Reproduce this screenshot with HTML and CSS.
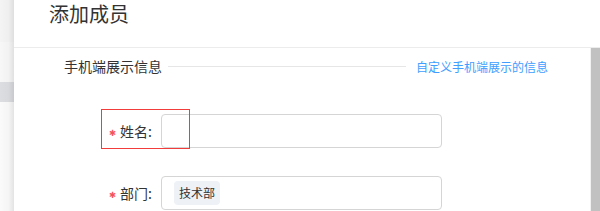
FILE: index.html
```html
<!DOCTYPE html>
<html lang="zh-CN">
<head>
<meta charset="utf-8">
<title>添加成员</title>
<link rel="stylesheet" href="styles.css">
</head>
<body>
<div class="screen">
  <div class="backdrop">
    <div class="bd-a"></div>
    <div class="bd-b"></div>
    <div class="bd-c"></div>
    <div class="bd-d"></div>
  </div>
  <div class="modal">
    <div class="modal-header">添加成员</div>
    <div class="modal-main">
      <div class="modal-body">
        <div class="section-title">
          <span class="section-name">手机端展示信息</span>
          <span class="section-line"></span>
          <a class="section-link">自定义手机端展示的信息</a>
        </div>
        <div class="form">
          <div class="form-row">
            <label class="form-label"><span class="req">✱</span>姓名:</label>
            <div class="input"></div>
          </div>
          <div class="form-row">
            <label class="form-label"><span class="req">✱</span>部门:</label>
            <div class="input"><span class="tag">技术部</span></div>
          </div>
        </div>
        <div class="highlight"></div>
      </div>
      <div class="scrollbar"><div class="thumb"></div></div>
    </div>
  </div>
</div>
</body>
</html>
```
FILE: styles.css
```css
html, body {
  margin: 0;
  padding: 0;
  background: #fff;
  font-family: "Noto Sans CJK SC", "Noto Sans", "Liberation Sans", sans-serif;
  color: #333;
}
.screen {
  display: flex;
  width: 600px;
  height: 211px;
  overflow: hidden;
}
.backdrop {
  width: 14px;
  flex: none;
  display: flex;
  flex-direction: column;
  position: relative;
}
.backdrop::after {
  content: "";
  position: absolute;
  inset: 0;
  background: linear-gradient(to right, rgba(0,0,0,0) 0, rgba(0,0,0,0.02) 60%, rgba(0,0,0,0.09) 100%);
}
.bd-a { height: 42px; background: #f4f4f4; }
.bd-b { height: 40px; background: #f7f7f7; }
.bd-c { height: 20px; background: #dcdde0; }
.bd-d { flex: 1; background: #fafafa; }
.modal {
  flex: 1;
  display: flex;
  flex-direction: column;
  background: #fff;
}
.modal-header {
  height: 47px;
  border-bottom: 1px solid #ececec;
  padding-left: 35px;
  font-size: 20px;
  line-height: 28px;
  color: #333;
  flex: none;
}
.modal-main {
  flex: 1;
  display: flex;
}
.modal-body {
  flex: 1;
  position: relative;
}
.scrollbar {
  width: 10px;
  flex: none;
  background: #f1f1f1;
  display: flex;
}
.thumb {
  margin-left: 1px;
  flex: 1;
  background: #c1c1c1;
}
.section-title {
  display: flex;
  align-items: center;
  height: 20px;
  margin-top: 8px;
  padding-left: 50px;
  padding-right: 42px;
}
.section-name {
  font-size: 14px;
  color: #333;
  white-space: nowrap;
}
.section-line {
  flex: 1;
  height: 1px;
  background: #e6e6e6;
  margin: 0 10px 0 6px;
}
.section-link {
  font-size: 12px;
  color: #409eff;
  white-space: nowrap;
}
.form {
  margin-top: 38px;
  display: flex;
  flex-direction: column;
  gap: 28px;
}
.form-row {
  display: flex;
  align-items: center;
  height: 34px;
}
.form-label {
  width: 147px;
  padding-right: 9px;
  box-sizing: border-box;
  text-align: right;
  font-size: 14px;
  color: #333;
}
.req {
  color: #f5545c;
  margin-right: 4px;
  font-family: "DejaVu Sans", sans-serif;
  font-size: 8.5px;
  vertical-align: 1px;
}
.input {
  width: 281px;
  height: 34px;
  box-sizing: border-box;
  border: 1px solid #d5d5d5;
  border-radius: 4px;
  display: flex;
  align-items: center;
  padding-left: 12px;
}
.tag {
  background: #eef1f5;
  border-radius: 4px;
  font-size: 12px;
  line-height: 24px;
  padding: 0 5px;
  color: #333;
}
.highlight {
  position: absolute;
  left: 87px;
  top: 61px;
  width: 89px;
  height: 40px;
  box-sizing: border-box;
  border: 1px solid #f23c3c;
}
```
